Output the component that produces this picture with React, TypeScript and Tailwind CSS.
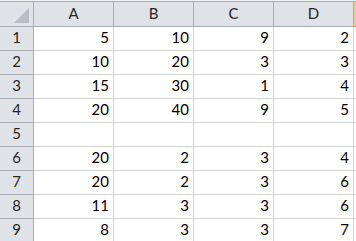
import React from "react";

const columns = ["A", "B", "C", "D"];

const rows: (number | null)[][] = [
  [5, 10, 9, 2],
  [10, 20, 3, 3],
  [15, 30, 1, 4],
  [20, 40, 9, 5],
  [null, null, null, null],
  [20, 2, 3, 4],
  [20, 2, 3, 6],
  [11, 3, 3, 6],
  [8, 3, 3, 7],
];

const font = { fontFamily: "Lato, 'Open Sans', 'Liberation Sans', sans-serif" };

export default function App() {
  return (
    <div className="w-[356px] h-[241px] overflow-hidden bg-white text-[15px] leading-none text-black" style={font}>
      {/* column header strip */}
      <div className="flex h-[27px] border-t border-t-[#f4f5f7] bg-[#f4f5f7]">
        <div className="flex w-full border-t border-[#a9aeb5]">
          <div className="relative w-[34px] shrink-0 border-r border-b border-[#a9aeb5] bg-[#dfe2e7]">
            <div
              className="absolute right-[4px] bottom-[3px] h-[15px] w-[15px] bg-[#b9bdc4]"
              style={{ clipPath: "polygon(100% 0, 100% 100%, 0 100%)" }}
            />
          </div>
          {columns.map((c) => (
            <div
              key={c}
              className="flex w-[80px] shrink-0 items-center justify-center border-r border-b border-[#a9aeb5] bg-[#dfe2e7] pb-[1px] text-[#262626]"
            >
              {c}
            </div>
          ))}
          <div className="flex-1 border-b border-[#d49e48] bg-[#f6c97f]" />
        </div>
      </div>

      {/* data rows */}
      {rows.map((r, i) => (
        <div key={i} className="flex h-[24px]">
          <div className="flex w-[34px] shrink-0 items-end justify-center border-r border-b border-[#a9aeb5] bg-[#dfe2e7] pb-[5px] text-[#262626]">
            {i + 1}
          </div>
          {r.map((v, j) => (
            <div
              key={j}
              className="flex w-[80px] shrink-0 items-end justify-end border-r border-b border-[#d4d4d4] pr-[4px] pb-[5px]"
            >
              {v ?? ""}
            </div>
          ))}
          <div className="flex-1 border-b border-[#d4d4d4]" />
        </div>
      ))}
    </div>
  );
}
